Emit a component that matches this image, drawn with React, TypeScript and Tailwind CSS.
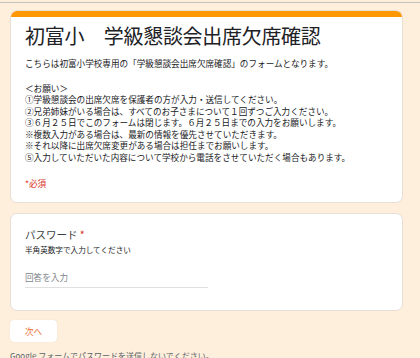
export default function App() {
  const notes = [
    '①学級懇談会の出席欠席を保護者の方が入力・送信してください。',
    '②兄弟姉妹がいる場合は、すべてのお子さまについて１回ずつご入力ください。',
    '③６月２５日でこのフォームは閉じます。６月２５日までの入力をお願いします。',
    '※複数入力がある場合は、最新の情報を優先させていただきます。',
    '※それ以降に出席欠席変更がある場合は担任までお願いします。',
    '⑤入力していただいた内容について学校から電話をさせていただく場合もあります。',
  ];

  return (
    <div
      className="h-[358px] w-[420px] overflow-hidden bg-[#fdefdc] text-[#202124]"
      style={{ fontFamily: '"Noto Sans CJK JP", "Noto Sans", sans-serif' }}
    >
      <div className="h-[2px]" />
      <div className="h-px bg-[#c4c0bb]" />
      <div className="flex flex-col gap-[10px] pl-[10px] pr-[17px] pt-[7px]">
        {/* Header card */}
        <div className="overflow-hidden rounded-[7px] border border-[#e6dfd6] bg-white">
          <div className="h-[6px] bg-[#ff9800]" />
          <div className="px-[14px] pb-[13px] pt-[3px]">
            <h1 className="text-[20px] leading-[32px] tracking-[-0.3px]">初富小　学級懇談会出席欠席確認</h1>
            <p className="mt-[6px] text-[8.6px] leading-[11.5px]">
              こちらは初富小学校専用の「学級懇談会出席欠席確認」のフォームとなります。
            </p>
            <div className="mt-[13px] text-[8.6px] leading-[11.5px]">
              <div>＜お願い＞</div>
              {notes.map((n) => (
                <div key={n}>{n}</div>
              ))}
            </div>
            <div className="mt-[15px] text-[8.6px] leading-[11px] text-[#d93025]">*必須</div>
          </div>
        </div>

        {/* Password card */}
        <div className="rounded-[7px] border border-[#e6dfd6] bg-white px-[14px] pb-[22px] pt-[14px]">
          <div className="text-[10.5px] leading-[14px] text-[#3c4043]">
            パスワード <span className="text-[#d93025]">*</span>
          </div>
          <div className="mt-[2px] text-[7.6px] leading-[11px]">半角英数字で入力してください</div>
          <div className="mt-[15px] w-[183px] border-b border-[#e0e0e0] pb-[3px] text-[8.6px] leading-[14px] text-[#80868b]">
            回答を入力
          </div>
        </div>

        {/* Button */}
        <div className="-mt-[1px]">
          <div className="flex h-[22px] w-[47px] items-center justify-center rounded-[4px] bg-white text-[8.6px] text-[#e8743b] shadow-[0_0_1px_rgba(0,0,0,0.15)]">
            次へ
          </div>
        </div>
        <div className="-mt-[2px] text-[8px] leading-[11px] text-[#5f6368]">
          Google フォームでパスワードを送信しないでください。
        </div>
      </div>
    </div>
  );
}
